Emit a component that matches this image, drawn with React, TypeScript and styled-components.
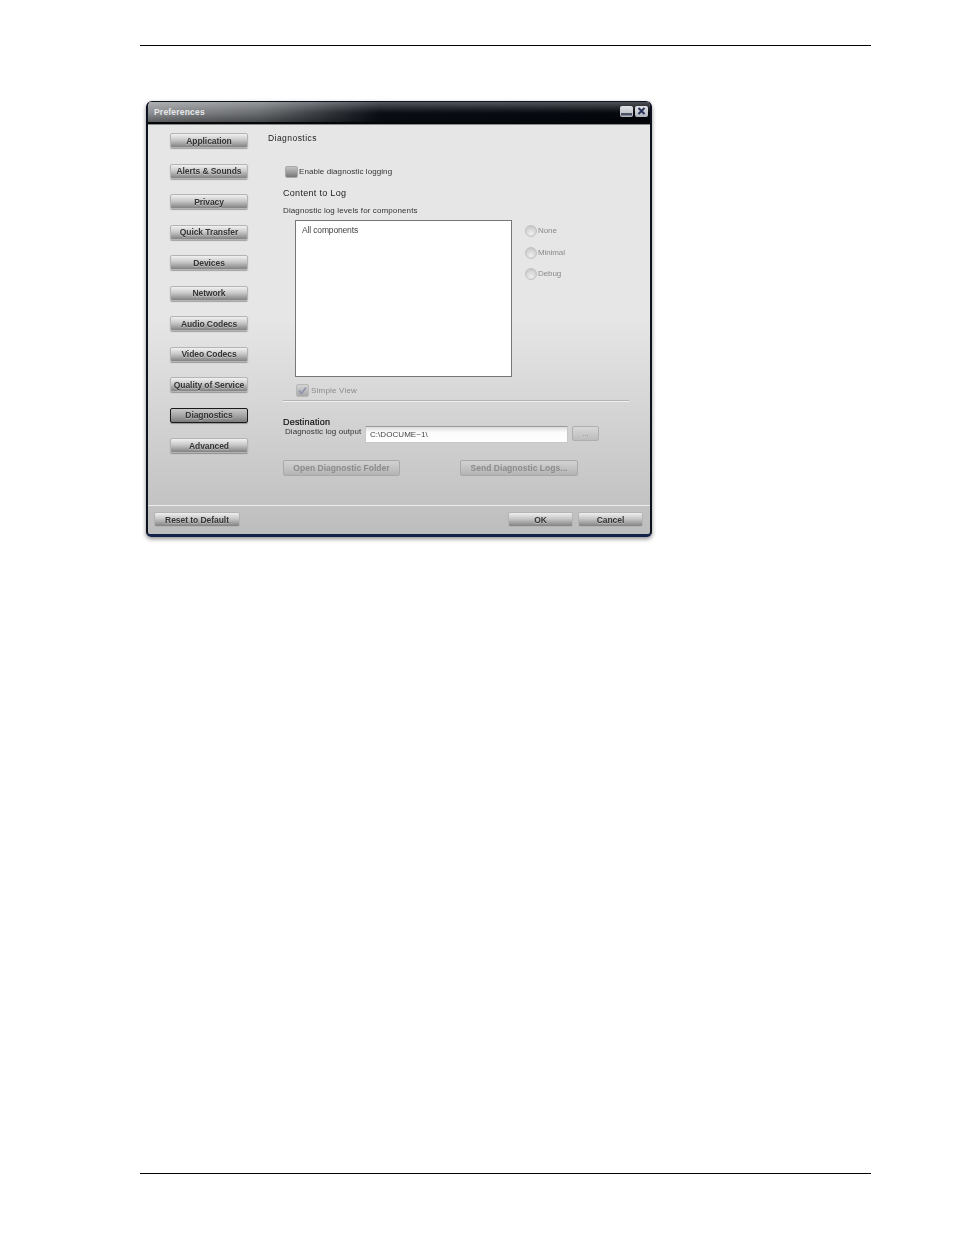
import { createGlobalStyle, styled } from "styled-components";

const GlobalStyle = createGlobalStyle`
  html, body {
    margin: 0;
    padding: 0;
    background: #fff;
  }
  body {
    font-family: "Liberation Sans", Arial, sans-serif;
  }
`;

const navItems = [
  "Application",
  "Alerts & Sounds",
  "Privacy",
  "Quick Transfer",
  "Devices",
  "Network",
  "Audio Codecs",
  "Video Codecs",
  "Quality of Service",
  "Diagnostics",
  "Advanced",
];

const levels = ["None", "Minimal", "Debug"];

export default function App() {
  return (
    <>
      <GlobalStyle />
      <Page>
        <Rule />
        <Win>
          <TitleBar>
            <TitleText>Preferences</TitleText>
            <TitleButtons>
              <TitleBtn>
                <svg width="13" height="11" viewBox="0 0 13 11">
                  <rect x="1" y="7" width="11" height="2.5" fill="#4a5264" />
                </svg>
              </TitleBtn>
              <TitleBtn>
                <svg width="13" height="11" viewBox="0 0 13 11">
                  <path d="M3.5 2 L9.5 8 M9.5 2 L3.5 8" stroke="#27335a" strokeWidth="2" />
                </svg>
              </TitleBtn>
            </TitleButtons>
          </TitleBar>
          <Body>
            <Sidebar>
              {navItems.map((item) => (
                <NavButton key={item} $active={item === "Diagnostics"}>
                  {item}
                </NavButton>
              ))}
            </Sidebar>
            <Content>
              <Heading>Diagnostics</Heading>
              <CheckRow>
                <CheckBox />
                <Label>Enable diagnostic logging</Label>
              </CheckRow>
              <Section>Content to Log</Section>
              <ListCaption>Diagnostic log levels for components</ListCaption>
              <ListRow>
                <ListBox>All components</ListBox>
                <RadioGroup>
                  {levels.map((level) => (
                    <RadioRow key={level}>
                      <Radio />
                      <RadioLabel>{level}</RadioLabel>
                    </RadioRow>
                  ))}
                </RadioGroup>
              </ListRow>
              <SimpleRow>
                <DimCheck>
                  <svg width="11" height="11" viewBox="0 0 11 11">
                    <path d="M2 5.5 L4.5 8.5 L9 2.5" fill="none" stroke="#9498ae" strokeWidth="2" />
                  </svg>
                </DimCheck>
                <DimLabel>Simple View</DimLabel>
              </SimpleRow>
              <Divider />
              <DestTitle>Destination</DestTitle>
              <OutputRow>
                <OutputLabel>Diagnostic log output</OutputLabel>
                <PathInput>C:\DOCUME~1\</PathInput>
                <BrowseButton>...</BrowseButton>
              </OutputRow>
              <ActionRow>
                <DisabledButton $w={117}>Open Diagnostic Folder</DisabledButton>
                <DisabledButton $w={118}>Send Diagnostic Logs...</DisabledButton>
              </ActionRow>
            </Content>
          </Body>
          <Footer>
            <FooterButton $w={86}>Reset to Default</FooterButton>
            <FooterRight>
              <FooterButton $w={65}>OK</FooterButton>
              <FooterButton $w={65}>Cancel</FooterButton>
            </FooterRight>
          </Footer>
        </Win>
        <BottomRule />
      </Page>
    </>
  );
}

const Page = styled.div`
  width: 954px;
  height: 1235px;
  box-sizing: border-box;
  padding: 45px 83px 0 140px;
  overflow: hidden;
`;

const Rule = styled.div`
  height: 1px;
  background: #000;
`;

const BottomRule = styled(Rule)`
  margin-top: 636px;
`;

const Win = styled.div`
  width: 506px;
  height: 436px;
  margin: 55px 0 0 6px;
  box-sizing: border-box;
  display: flex;
  flex-direction: column;
  border-radius: 6px 6px 5px 5px;
  border: 2px solid #0d1220;
  border-top: 0;
  border-bottom: 3px solid #12204a;
  box-shadow: 0 2px 4px rgba(0, 0, 0, 0.45);
  background: linear-gradient(180deg, #e6e6e6 0%, #e6e6e6 50%, #c4c4c4 92%, #bdbdbd 100%);
  overflow: hidden;
  filter: blur(0.45px);
`;

const TitleBar = styled.div`
  height: 23px;
  flex: none;
  display: flex;
  align-items: center;
  justify-content: space-between;
  padding: 0 2px 1px 6px;
  box-sizing: border-box;
  background:
    linear-gradient(180deg, rgba(255, 255, 255, 0.3) 0%, rgba(255, 255, 255, 0.1) 35%, rgba(0, 0, 0, 0) 55%, rgba(0, 0, 0, 0.35) 100%),
    linear-gradient(90deg, #8d8f92 0%, #6a6d70 22%, #0a0e16 46%, #04070d 100%);
  border-top: 1px solid #0d1220;
  border-bottom: 2px solid #050608;
`;

const TitleText = styled.span`
  font-size: 8.5px;
  font-weight: bold;
  letter-spacing: 0.2px;
  color: #e6e8ea;
`;

const TitleButtons = styled.div`
  display: flex;
  gap: 2px;
`;

const TitleBtn = styled.div`
  width: 13px;
  height: 11px;
  display: flex;
  border-radius: 2px;
  background: linear-gradient(180deg, #dfe2e6 0%, #b2b6bc 100%);
`;

const Body = styled.div`
  flex: 1;
  display: flex;
  min-height: 0;
  border-top: 1px solid #8a8a8a;
`;

const Sidebar = styled.nav`
  width: 120px;
  flex: none;
  box-sizing: border-box;
  padding: 8px 0 0 22px;
  display: flex;
  flex-direction: column;
  gap: 15.5px;
`;

const NavButton = styled.div<{ $active?: boolean }>`
  width: 78px;
  height: 15px;
  flex: none;
  display: flex;
  align-items: center;
  justify-content: center;
  font-size: 8.5px;
  font-weight: bold;
  letter-spacing: -0.08px;
  color: #333;
  white-space: nowrap;
  border-radius: 2px;
  box-sizing: border-box;
  text-shadow: 0 1px 0 rgba(255, 255, 255, 0.35);
  background: ${({ $active }) =>
    $active
      ? "linear-gradient(180deg, #c8c8c8 0%, #a2a2a2 55%, #7c7c7c 100%)"
      : "linear-gradient(180deg, #f1f1f1 0%, #c9c9c9 45%, #828282 100%)"};
  border: 1px solid ${({ $active }) => ($active ? "#1a1a1a" : "#b4b4b4")};
  box-shadow: 0 1px 1px rgba(0, 0, 0, 0.3);
`;

const Content = styled.div`
  flex: 1;
  padding-top: 8px;
  display: flex;
  flex-direction: column;
  align-items: flex-start;
`;

const Label = styled.span`
  font-size: 8px;
  letter-spacing: 0.08px;
  line-height: 10px;
  color: #333;
  white-space: nowrap;
`;

const ListCaption = styled(Label)`
  margin-left: 15px;
  letter-spacing: 0.12px;
`;

const DimLabel = styled(Label)`
  color: #8a8a8a;
  letter-spacing: 0.2px;
`;

const RadioLabel = styled(DimLabel)`
  letter-spacing: -0.1px;
`;

const Heading = styled.div`
  font-size: 8.5px;
  line-height: 10px;
  letter-spacing: 0.45px;
  color: #222;
`;

const CheckRow = styled.div`
  display: flex;
  align-items: center;
  gap: 1px;
  margin: 23px 0 0 17px;
`;

const CheckBox = styled.div`
  width: 13px;
  height: 12px;
  border-radius: 2px;
  background: linear-gradient(180deg, #c4c4c4 0%, #777 100%);
  border: 1px solid #aaa;
  box-sizing: border-box;
`;

const Section = styled.div`
  font-size: 9px;
  line-height: 11px;
  letter-spacing: 0.3px;
  color: #222;
  margin: 10px 0 7px 15px;
`;

const ListRow = styled.div`
  display: flex;
  gap: 13px;
  margin: 4px 0 0 27px;
`;

const ListBox = styled.div`
  width: 217px;
  height: 157px;
  box-sizing: border-box;
  padding: 4px 6px;
  background: #fff;
  border: 1px solid #777;
  font-size: 8.5px;
  line-height: 10px;
  letter-spacing: -0.15px;
  color: #444;
`;

const RadioGroup = styled.div`
  display: flex;
  flex-direction: column;
  gap: 9.5px;
  padding-top: 5px;
`;

const RadioRow = styled.div`
  display: flex;
  align-items: center;
  gap: 1px;
  height: 12px;
`;

const Radio = styled.div`
  width: 12px;
  height: 12px;
  border-radius: 50%;
  box-sizing: border-box;
  border: 1px solid #c2c2c2;
  background: radial-gradient(circle at 50% 75%, #eeeeee 0%, #d6d6d6 55%, #bcbcbc 100%);
`;

const SimpleRow = styled.div`
  display: flex;
  align-items: center;
  gap: 2px;
  margin: 7px 0 0 28px;
`;

const DimCheck = styled.div`
  width: 13px;
  height: 13px;
  box-sizing: border-box;
  border-radius: 2px;
  display: flex;
  align-items: center;
  justify-content: center;
  background: linear-gradient(180deg, #d4d4d4 0%, #a8a8a8 100%);
  border: 1px solid #b8b8b8;
`;

const Divider = styled.div`
  width: 346px;
  height: 1px;
  margin: 3px 0 0 15px;
  background: #b4b4b4;
  box-shadow: 0 1px 0 #efefef;
`;

const DestTitle = styled.div`
  font-size: 9px;
  line-height: 10px;
  letter-spacing: 0.2px;
  color: #111;
  -webkit-text-stroke: 0.2px #111;
  margin: 16px 0 0 15px;
`;

const OutputRow = styled.div`
  display: flex;
  align-items: flex-start;
  margin: 0 0 0 17px;
`;

const OutputLabel = styled(Label)`
  width: 80px;
  flex: none;
`;

const PathInput = styled.div`
  width: 203px;
  height: 17px;
  box-sizing: border-box;
  margin-top: -1px;
  padding: 3px 4px;
  font-size: 8px;
  line-height: 10px;
  letter-spacing: 0.05px;
  color: #444;
  background: linear-gradient(180deg, #dcdcdc 0%, #fbfbfb 35%, #fff 100%);
  border: 1px solid #c8c8c8;
  border-top-color: #9a9a9a;
`;

const BrowseButton = styled.div`
  width: 27px;
  height: 15px;
  margin: -1px 0 0 4px;
  box-sizing: border-box;
  display: flex;
  align-items: center;
  justify-content: center;
  font-size: 8px;
  color: #888;
  border-radius: 2px;
  background: linear-gradient(180deg, #d8d8d8 0%, #bcbcbc 100%);
  border: 1px solid #aeaeae;
`;

const ActionRow = styled.div`
  display: flex;
  gap: 60px;
  margin: 17px 0 0 15px;
`;

const DisabledButton = styled.div<{ $w: number }>`
  width: ${({ $w }) => $w}px;
  height: 16px;
  box-sizing: border-box;
  display: flex;
  align-items: center;
  justify-content: center;
  font-size: 8.5px;
  font-weight: bold;
  letter-spacing: 0.02px;
  color: #8b8b8b;
  border-radius: 2px;
  background: linear-gradient(180deg, #d2d2d2 0%, #b4b4b4 100%);
  border: 1px solid #a8a8a8;
`;

const Footer = styled.div`
  height: 29px;
  flex: none;
  box-sizing: border-box;
  padding: 6px 7px 0 6px;
  display: flex;
  justify-content: space-between;
  border-top: 1px solid #ececec;
`;

const FooterRight = styled.div`
  display: flex;
  gap: 5px;
`;

const FooterButton = styled.div<{ $w: number }>`
  width: ${({ $w }) => $w}px;
  height: 15px;
  box-sizing: border-box;
  display: flex;
  align-items: center;
  justify-content: center;
  font-size: 8.5px;
  font-weight: bold;
  letter-spacing: -0.05px;
  color: #333;
  border-radius: 2px;
  text-shadow: 0 1px 0 rgba(255, 255, 255, 0.35);
  background: linear-gradient(180deg, #efefef 0%, #c6c6c6 45%, #828282 100%);
  border: 1px solid #b4b4b4;
`;
